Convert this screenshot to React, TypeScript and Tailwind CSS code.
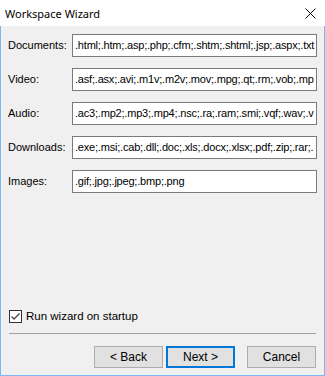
import React from 'react';

// values trimmed to what fits in the edit boxes
const rows = [
  { label: 'Documents:', value: '.html;.htm;.asp;.php;.cfm;.shtm;.shtml;.jsp;.aspx;.txt' },
  { label: 'Video:', value: '.asf;.asx;.avi;.m1v;.m2v;.mov;.mpg;.qt;.rm;.vob;.mp' },
  { label: 'Audio:', value: '.ac3;.mp2;.mp3;.mp4;.nsc;.ra;.ram;.smi;.vqf;.wav;.v' },
  { label: 'Downloads:', value: '.exe;.msi;.cab;.dll;.doc;.xls;.docx;.xlsx;.pdf;.zip;.rar;.' },
  { label: 'Images:', value: '.gif;.jpg;.jpeg;.bmp;.png' },
];

const WinButton = ({ children, focused }: { children: React.ReactNode; focused?: boolean }) => (
  <button
    className={
      focused
        ? 'w-[69px] h-[22px] bg-[#e1e1e1] border-2 border-[#0078d7] text-[12px] text-black flex items-center justify-center'
        : 'w-[69px] h-[22px] bg-[#e1e1e1] border border-[#adadad] text-[12px] text-black flex items-center justify-center'
    }
  >
    {children}
  </button>
);

const App = () => {
  return (
    <div className="w-[325px] h-[376px] flex flex-col bg-white font-['Liberation_Sans',Arial,sans-serif] text-black">
      {/* title bar */}
      <div className="h-[26px] flex items-center justify-between pl-[5px] pr-[9px] bg-white">
        <span className="text-[11px] font-['Noto_Sans',sans-serif] leading-none">Workspace Wizard</span>
        <svg width="11" height="11" viewBox="0 0 11 11">
          <path d="M0.5 0.5 L10.5 10.5 M10.5 0.5 L0.5 10.5" stroke="#000" strokeWidth="1" fill="none" />
        </svg>
      </div>

      <div className="flex-1 flex flex-col bg-[#f0f0f0] border-x border-b border-[#7ab8f5] pt-[8px] pb-[7px]">
        <div className="flex flex-col gap-[11px] pl-[7px] pr-[7px]">
          {rows.map((r) => (
            <div key={r.label} className="flex items-center">
              <span className="w-[64px] text-[11px]">{r.label}</span>
              <div className="flex-1 h-[23px] bg-white border border-[#7a7a7a] flex items-center pl-[2px] overflow-hidden whitespace-nowrap">
                <span className="text-[11px] tracking-[-0.2px]">{r.value}</span>
              </div>
            </div>
          ))}
        </div>

        <div className="flex-1" />

        <label className="flex items-center gap-[4px] pl-[8px] mt-[2px]">
          <span className="w-[13px] h-[13px] border border-[#333] bg-white flex items-center justify-center">
            <svg width="11" height="11" viewBox="0 0 11 11">
              <path d="M1.5 5.5 L4 8 L9.5 2.5" fill="none" stroke="#444" strokeWidth="1.3" />
            </svg>
          </span>
          <span className="text-[11.5px]">Run wizard on startup</span>
        </label>

        <div className="mx-[8px] mt-[8px] h-px bg-[#a0a0a0]" />

        <div className="flex justify-end items-center pr-[8px] mt-[12px]">
          <WinButton>&lt; Back</WinButton>
          <div className="w-[3px]" />
          <WinButton focused>Next &gt;</WinButton>
          <div className="w-[12px]" />
          <WinButton>Cancel</WinButton>
        </div>
      </div>
    </div>
  );
};

export default App;
